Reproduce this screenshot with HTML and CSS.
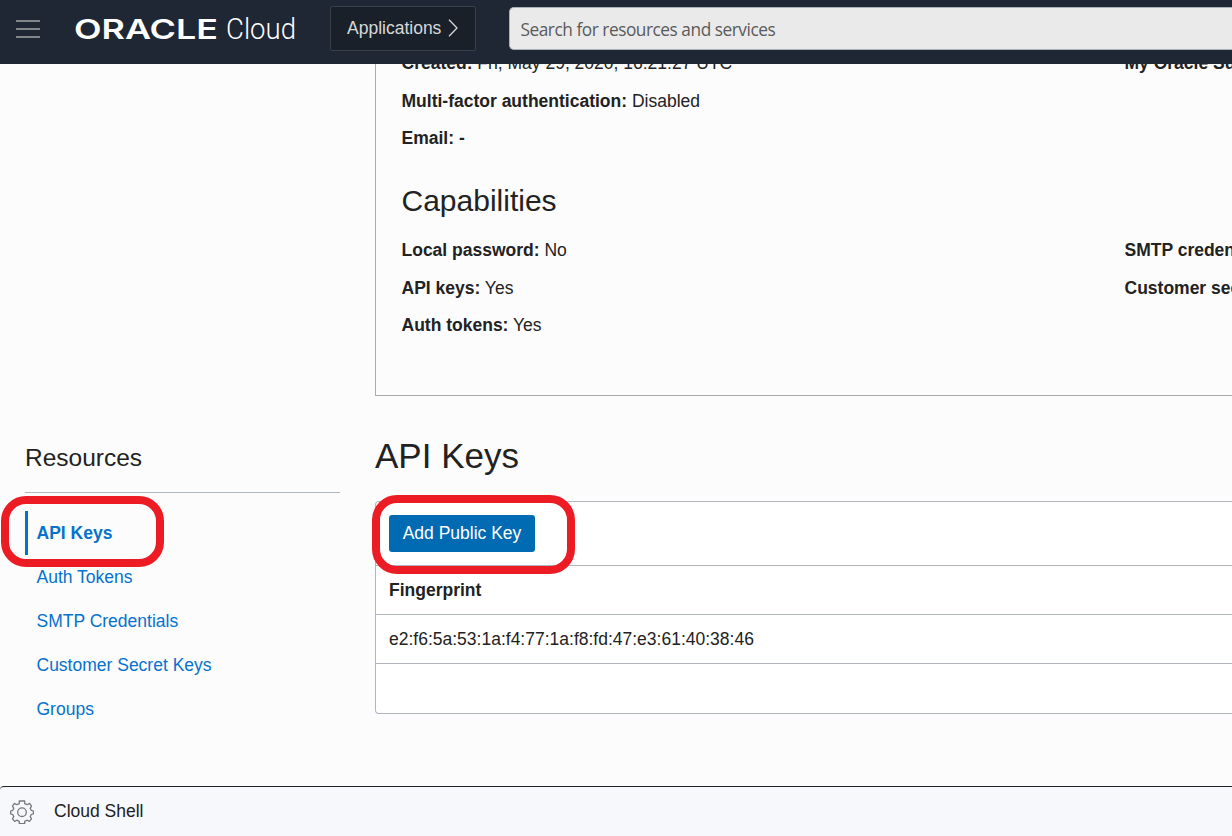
FILE: index.html
```html
<!DOCTYPE html>
<html lang="en">
<head>
<meta charset="utf-8">
<title>Oracle Cloud</title>
<link rel="stylesheet" href="styles.css">
</head>
<body>
<header class="topbar">
  <svg class="menu" width="24" height="18" viewBox="0 0 24 18"><path d="M0 1h24M0 9h24M0 17h24" stroke="#a3a5a8" stroke-width="1.6"/></svg>
  <svg class="logo" width="230" height="32" viewBox="0 0 230 32">
    <text class="brand" x="0" y="25.5" textLength="144" lengthAdjust="spacingAndGlyphs">ORACLE</text>
    <text class="brand-sub" x="152" y="25.5" textLength="70" lengthAdjust="spacingAndGlyphs">Cloud</text>
  </svg>
  <button class="apps">Applications
    <svg width="10" height="18" viewBox="0 0 10 18"><path d="M1 .8L9 9L1 17.2" fill="none" stroke="#d8d8d8" stroke-width="1.3"/></svg>
  </button>
  <div class="search">Search for resources and services</div>
</header>
<main class="page">
  <section class="details">
    <div class="info">
      <p class="row"><b>Created:</b> Fri, May 29, 2020, 16:21:27 UTC</p><p class="row"><b>My Oracle Su</b></p>
      <p class="row"><b>Multi-factor authentication:</b> Disabled</p><p class="row"></p>
      <p class="row"><b>Email: -</b></p><p class="row"></p>
    </div>
    <h2 class="cap-title">Capabilities</h2>
    <div class="info">
      <p class="row"><b>Local password:</b> No</p><p class="row"><b>SMTP creden</b></p>
      <p class="row"><b>API keys:</b> Yes</p><p class="row"><b>Customer sec</b></p>
      <p class="row"><b>Auth tokens:</b> Yes</p><p class="row"></p>
    </div>
  </section>
  <div class="columns">
    <nav class="resources">
      <h3 class="res-title">Resources</h3>
      <a class="item active">API Keys<span class="callout callout-nav"></span></a>
      <a class="item">Auth Tokens</a>
      <a class="item">SMTP Credentials</a>
      <a class="item">Customer Secret Keys</a>
      <a class="item">Groups</a>
    </nav>
    <section class="keys">
      <h1 class="keys-title">API Keys</h1>
      <div class="table">
        <div class="toolbar"><button class="add">Add Public Key</button><span class="callout callout-add"></span></div>
        <div class="cell head">Fingerprint</div>
        <div class="cell">e2:f6:5a:53:1a:f4:77:1a:f8:fd:47:e3:61:40:38:46</div>
        <div class="cell last"></div>
      </div>
    </section>
  </div>
</main>
<footer class="shell">
  <svg class="gear" width="24" height="24" viewBox="0 0 24 24" fill="none" stroke="#777a7d" stroke-width="1.3" stroke-linejoin="round">
    <path d="M9.3 1h5.4v2.6l2.5 1.1l2.4-1.3l1.900 2.700l-1.300 2.200l1 2l2.200.7v2.800l-2.200.7l-1 2.200l1.300 2.200l-2.100 2.500l-2.200-1.200l-2.500 1.100v2.300H9.300v-2.300l-2.500-1.100l-2.200 1.200l-2.100-2.500l1.300-2.200l-1-2.200l-2.100-.7v-2.800l2.100-.7l1-2l-1.300-2.200l1.900-2.700l2.400 1.300l2.500-1.100z"/>
    <circle cx="12" cy="12.2" r="4.3"/>
  </svg>
  <span class="shell-label">Cloud Shell</span>
</footer>
</body>
</html>
```
FILE: styles.css
```css
* { box-sizing: border-box; }
body {
  margin: 0;
  height: 836px;
  overflow: hidden;
  display: flex;
  flex-direction: column;
  background: #fcfcfc;
  color: #222;
  font: 17.5px/20px "Liberation Sans", Arial, sans-serif;
}
h1, h2, h3, p { margin: 0; font-weight: 400; }
button { font: inherit; margin: 0; }
.topbar {
  position: relative;
  z-index: 2;
  flex: none;
  height: 64px;
  display: flex;
  align-items: flex-start;
  background: #1e2733;
}
.menu { flex: none; margin: 20px 0 0 16px; }
.logo { flex: none; margin: 13px 0 0 34px; }
.brand { font: 600 27.5px Inter, sans-serif; fill: #fff; }
.brand-sub { font: 300 29px Roboto, sans-serif; fill: #fff; }
.apps {
  flex: none;
  display: flex;
  align-items: center;
  gap: 7px;
  width: 146px;
  height: 45px;
  margin: 6px 0 0 26px;
  padding: 0 0 1px 16px;
  border: 1px solid #38404a;
  border-radius: 2px;
  background: #19202a;
  color: #d8d8d8;
  white-space: nowrap;
}
.search {
  flex: 1;
  height: 43px;
  margin: 7px 0 0 33px;
  padding: 0 10.5px;
  border: 1px solid #aab0b8;
  border-right: 0;
  border-radius: 5px 0 0 5px;
  background: #eaeaea;
  color: #5a5a5a;
  font: 17.3px/44px "Open Sans", sans-serif;
  letter-spacing: -.47px;
}
.page { flex: none; height: 742px; margin-top: -20px; }
.details {
  height: 352px;
  margin-left: 375px;
  padding: 1px 0 0 25.5px;
  border-left: 1px solid #a9abad;
  border-bottom: 1px solid #a9abad;
}
.info {
  display: grid;
  grid-template-columns: 723px 1fr;
  grid-auto-rows: 37.5px;
}
.row { line-height: 37.5px; white-space: nowrap; min-width: 0; }
.cap-title { height: 74.5px; padding-top: 25px; font-size: 30px; line-height: 36px; }
.columns { display: grid; grid-template-columns: 375px 1fr; }
.resources { padding: 44px 35px 0 25px; }
.res-title {
  height: 53px;
  margin-bottom: 18px;
  border-bottom: 1px solid #aeb7be;
  font-size: 24.5px;
  line-height: 36px;
}
.item {
  position: relative;
  display: block;
  height: 44px;
  padding-left: 11.5px;
  color: #0572ce;
  line-height: 44px;
}
.active { padding-left: 8.5px; border-left: 3px solid #0572ce; font-weight: 700; }
.callout { position: absolute; border: 8px solid #ed1c24; border-radius: 25px; }
.callout-nav { left: -27px; top: -15px; width: 163px; height: 71px; }
.callout-add { left: -4px; top: -7px; width: 203px; height: 79px; }
.keys-title { padding-top: 39px; height: 105px; font-size: 35px; line-height: 42px; }
.table {
  height: 213px;
  border: 1px solid #b0b5c0;
  border-right: 0;
  border-radius: 4px 0 0 4px;
  background: #fff;
}
.toolbar { position: relative; height: 64px; padding: 13px; border-bottom: 1px solid #b0b5c0; }
.add {
  display: block;
  width: 146px;
  height: 37px;
  padding: 0 0 2px;
  border: 0;
  border-radius: 3px;
  background: #006bb2;
  color: #fff;
}
.cell { height: 49px; padding-left: 13px; line-height: 48px; border-bottom: 1px solid #b0b5c0; }
.head { font-weight: 700; }
.last { border: 0; }
.shell {
  flex: 1;
  display: flex;
  align-items: center;
  gap: 20px;
  padding-left: 10px;
  border-top: 1px solid #202225;
  border-top-left-radius: 4px;
  background: #f7f8fb;
}
.gear { margin-bottom: 0; }
.shell-label { margin-bottom: 2px; }
```
